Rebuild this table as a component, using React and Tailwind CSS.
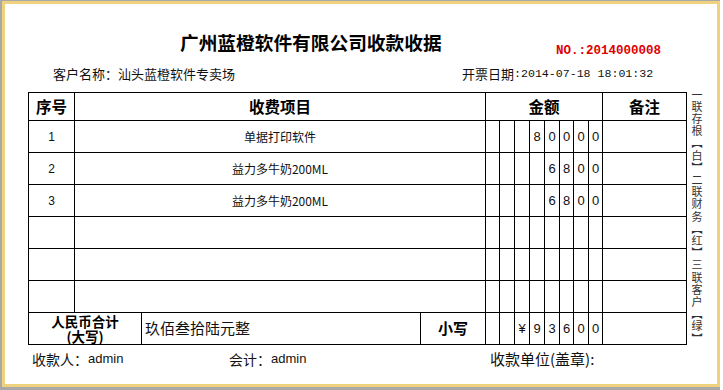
import React from "react";

const digitWidths = ["w-[14px]", "w-[15px]", "w-[15px]", "w-[15px]", "w-[15px]", "w-[14px]", "w-[15px]", "w-[14px]"];

const rows = [
  { n: "1", item: "单据打印软件", d: ["", "", "", "8", "0", "0", "0", "0"] },
  { n: "2", item: "益力多牛奶200ML", d: ["", "", "", "", "6", "8", "0", "0"] },
  { n: "3", item: "益力多牛奶200ML", d: ["", "", "", "", "6", "8", "0", "0"] },
  { n: "", item: "", d: ["", "", "", "", "", "", "", ""] },
  { n: "", item: "", d: ["", "", "", "", "", "", "", ""] },
  { n: "", item: "", d: ["", "", "", "", "", "", "", ""] },
];

function Digits({ d }) {
  return (
    <>
      {d.map((v, i) => (
        <div
          key={i}
          className={`${digitWidths[i]} h-full shrink-0 border-r border-black flex items-center justify-center text-[13px] text-[#111] font-['Liberation_Sans',sans-serif]`}
        >
          {v}
        </div>
      ))}
    </>
  );
}

export default function App() {
  return (
    <div className="w-[723px] h-[390px] bg-white font-['Liberation_Sans','Noto_Sans_CJK_SC',sans-serif] text-[#111]">
      <div className="w-[720px] h-[390px] bg-[#a8a8a8] pl-[2px] pt-[1px] pb-[3px]">
        <div className="w-[718px] h-[386px] border-[3px] border-[#efd27e] bg-white flex flex-col">
          {/* Title row */}
          <div className="h-[56px] flex items-start shrink-0">
            <div className="ml-[175px] w-[376px] pt-[28px] text-[18.7px] leading-[19px] font-bold text-black font-['Noto_Sans_CJK_SC',sans-serif]">
              广州蓝橙软件有限公司收款收据
            </div>
            <div className="pt-[41px] text-[12.5px] leading-[13px] font-bold text-[#e00000] font-['Liberation_Mono',monospace]">
              NO.:2014000008
            </div>
          </div>
          {/* Customer / date */}
          <div className="h-[28px] flex items-center shrink-0">
            <div className="ml-[48px] w-[409px] text-[13px] leading-[16px] font-['Noto_Sans_CJK_SC',sans-serif]">
              客户名称：汕头蓝橙软件专卖场
            </div>
            <div className="text-[13px] leading-[16px] flex items-center">
              <span className="font-['Noto_Sans_CJK_SC',sans-serif]">开票日期</span>
              <span className="font-['Liberation_Mono',monospace] text-[11.6px]">:2014-07-18 18:01:32</span>
            </div>
          </div>
          {/* Table + vertical note */}
          <div className="mt-[4px] flex items-start shrink-0">
            <div className="ml-[23px] border-l border-t border-black flex flex-col">
              {/* header */}
              <div className="h-[28px] flex border-b border-black box-border text-[15.5px] font-bold text-black font-['Noto_Sans_CJK_SC',sans-serif]">
                <div className="w-[46px] border-r border-black flex items-center justify-center">序号</div>
                <div className="w-[411px] border-r border-black flex items-center justify-center">收费项目</div>
                <div className="w-[117px] border-r border-black flex items-center justify-center">金额</div>
                <div className="w-[84px] border-r border-black flex items-center justify-center">备注</div>
              </div>
              {rows.map((r, i) => (
                <div key={i} className="h-[32px] flex border-b border-black box-border">
                  <div className="w-[46px] border-r border-black flex items-center justify-center text-[12px] font-['Liberation_Sans',sans-serif]">
                    {r.n}
                  </div>
                  <div className="w-[411px] border-r border-black flex items-center justify-center text-[12px] font-['Noto_Sans_CJK_SC',sans-serif]">
                    {r.item}
                  </div>
                  <Digits d={r.d} />
                  <div className="w-[84px] border-r border-black" />
                </div>
              ))}
              {/* total row */}
              <div className="h-[32px] flex border-b border-black box-border">
                <div className="w-[113px] border-r border-black flex flex-col items-center justify-center text-[13.5px] leading-[15px] font-bold text-black font-['Noto_Sans_CJK_SC',sans-serif]">
                  <span>人民币合计</span>
                  <span>(大写)</span>
                </div>
                <div className="w-[279px] border-r border-black flex items-center pl-[3px] text-[15px] font-['Noto_Sans_CJK_SC',sans-serif]">
                  玖佰叁拾陆元整
                </div>
                <div className="w-[65px] border-r border-black flex items-center justify-center text-[15px] font-bold text-black font-['Noto_Sans_CJK_SC',sans-serif]">
                  小写
                </div>
                <Digits d={["", "", "¥", "9", "3", "6", "0", "0"]} />
                <div className="w-[84px] border-r border-black" />
              </div>
            </div>
            <div className="ml-[4px] mt-[-3px] w-[12px] [writing-mode:vertical-rl] text-[11px] leading-[12px] tracking-[1.2px] text-[#333] font-['Noto_Sans_CJK_SC',sans-serif]">
              一联存根︻白︼二联财务︻红︼三联客户︻绿︼
            </div>
          </div>
          {/* Footer */}
          <div className="h-[28px] flex items-center shrink-0 text-[14px]">
            <div className="ml-[27px] w-[197px] flex items-center">
              <span className="font-['Noto_Sans_CJK_SC',sans-serif]">收款人：</span>
              <span className="text-[13px] font-['Liberation_Sans',sans-serif]">admin</span>
            </div>
            <div className="w-[261px] flex items-center">
              <span className="font-['Noto_Sans_CJK_SC',sans-serif]">会计：</span>
              <span className="text-[13px] font-['Liberation_Sans',sans-serif]">admin</span>
            </div>
            <div className="text-[15px] font-['Noto_Sans_CJK_SC',sans-serif]">收款单位(盖章):</div>
          </div>
        </div>
      </div>
    </div>
  );
}
